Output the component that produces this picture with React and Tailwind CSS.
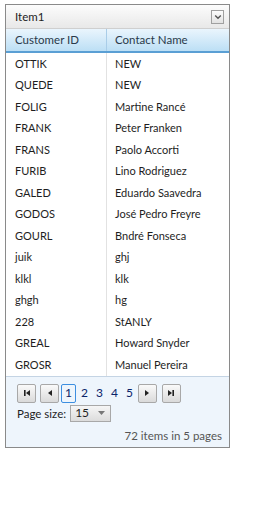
const rows = [
  ["OTTIK", "NEW"],
  ["QUEDE", "NEW"],
  ["FOLIG", "Martine Rancé"],
  ["FRANK", "Peter Franken"],
  ["FRANS", "Paolo Accorti"],
  ["FURIB", "Lino Rodriguez"],
  ["GALED", "Eduardo Saavedra"],
  ["GODOS", "José Pedro Freyre"],
  ["GOURL", "Bndré Fonseca"],
  ["juik", "ghj"],
  ["klkl", "klk"],
  ["ghgh", "hg"],
  ["228", "StANLY"],
  ["GREAL", "Howard Snyder"],
  ["GROSR", "Manuel Pereira"],
];

function PagerButton({ children }) {
  return (
    <button className="flex h-[19px] w-[19px] items-center justify-center rounded-[2px] border border-[#a8a8a8] bg-gradient-to-b from-[#fafafa] to-[#dadada]">
      {children}
    </button>
  );
}

export default function App() {
  return (
    <div className="h-[527px] w-[265px] bg-white pl-[5px] pt-[4px] text-[11px] text-[#1e1e1e]" style={{ fontFamily: 'Lato, sans-serif' }}>
      <div className="w-[225px] border border-[#8a8a8a]">
        <div className="flex h-[24px] items-center justify-between border-b border-[#cfcfcf] bg-gradient-to-b from-[#fcfcfc] to-[#e8e8e8] pl-[9px] pr-[5px] text-[11.5px]">
          <span>Item1</span>
          <div className="flex h-[14px] w-[13px] items-center justify-center border border-[#a0a0a0] bg-gradient-to-b from-[#fdfdfd] to-[#e2e2e2]">
            <svg width="8" height="6" viewBox="0 0 8 6"><path d="M1.2 1.5 L4 4.3 L6.8 1.5" fill="none" stroke="#555" strokeWidth="1.4" /></svg>
          </div>
        </div>
        <div className="flex h-[24px] border-b-2 border-[#5a9fd4] bg-gradient-to-b from-[#eaf5fd] to-[#bcdff5] text-[11.5px]">
          <div className="flex w-[101px] items-center border-r border-[#a9cde8] pl-[9px] text-[#2a3a4a]">Customer ID</div>
          <div className="flex flex-1 items-center pl-[8px] text-[#2a3a4a]">Contact Name</div>
        </div>
        <div>
          {rows.map(([id, name]) => (
            <div key={id} className="flex h-[21.5px]">
              <div className="flex w-[101px] items-center border-r border-[#e2e2e2] pl-[9px]">{id}</div>
              <div className="flex flex-1 items-center pl-[8px]">{name}</div>
            </div>
          ))}
        </div>
        <div className="h-[71px] border-t border-[#c4d4e4] bg-[#eef5fc] pl-[11px] pr-[7px] pt-[7px]">
          <div className="flex items-center">
            <PagerButton>
              <svg width="8" height="8" viewBox="0 0 8 8"><rect x="1" y="1" width="1.6" height="6" fill="#222" /><path d="M7 1 L3 4 L7 7 Z" fill="#222" /></svg>
            </PagerButton>
            <div className="ml-[4px]">
              <PagerButton>
                <svg width="8" height="8" viewBox="0 0 8 8"><path d="M6 1 L2 4 L6 7 Z" fill="#222" /></svg>
              </PagerButton>
            </div>
            <span className="ml-[2px] flex h-[19px] w-[15px] items-center justify-center rounded-[2px] border border-[#3c8ee0] text-[12px] text-[#0a246a]">1</span>
            <span className="ml-[5px] text-[12px] text-[#0a246a]">2</span>
            <span className="ml-[8px] text-[12px] text-[#0a246a]">3</span>
            <span className="ml-[8px] text-[12px] text-[#0a246a]">4</span>
            <span className="ml-[8px] text-[12px] text-[#0a246a]">5</span>
            <div className="ml-[5px]">
              <PagerButton>
                <svg width="8" height="8" viewBox="0 0 8 8"><path d="M2 1 L6 4 L2 7 Z" fill="#222" /></svg>
              </PagerButton>
            </div>
            <div className="ml-[5px]">
              <PagerButton>
                <svg width="8" height="8" viewBox="0 0 8 8"><path d="M1 1 L5 4 L1 7 Z" fill="#222" /><rect x="5.4" y="1" width="1.6" height="6" fill="#222" /></svg>
              </PagerButton>
            </div>
          </div>
          <div className="mt-[2px] flex items-center gap-[4px] text-[11.5px]">
            <span>Page size:</span>
            <div className="flex h-[17px] w-[41px] items-center justify-between border border-[#a8a8a8] bg-gradient-to-b from-[#f6f6f6] to-[#dcdcdc] pl-[4px] pr-[5px]">
              <span className="text-[12px]">15</span>
              <svg width="7" height="4" viewBox="0 0 7 4"><path d="M0 0 L7 0 L3.5 4 Z" fill="#777" /></svg>
            </div>
          </div>
          <div className="mt-[5px] text-right text-[11.5px] text-[#555]">72 items in 5 pages</div>
        </div>
      </div>
    </div>
  );
}
